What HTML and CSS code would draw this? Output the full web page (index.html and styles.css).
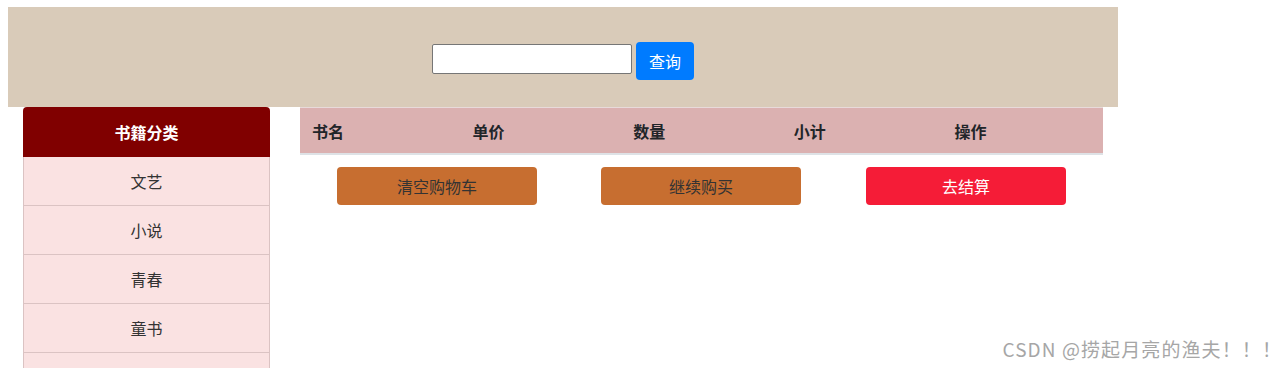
FILE: index.html
```html
<!DOCTYPE html>
<html lang="zh">
<head>
    <meta charset="UTF-8">
    <meta name="viewport" content="width=device-width, initial-scale=1.0">
    <title>购物车</title>
    <link rel="stylesheet" href="styles.css">
</head>
<body>

<div class="top-bar">
    <input type="text" class="search-input">
    <button class="search-btn">查询</button>
</div>

<div class="content">
    <div class="sidebar">
        <div class="sidebar-title">书籍分类</div>
        <div class="sidebar-item">文艺</div>
        <div class="sidebar-item">小说</div>
        <div class="sidebar-item">青春</div>
        <div class="sidebar-item">童书</div>
        <div class="sidebar-item">&nbsp;</div>
    </div>

    <div class="cart">
        <div class="cart-head">
            <div class="cart-col">书名</div>
            <div class="cart-col">单价</div>
            <div class="cart-col">数量</div>
            <div class="cart-col">小计</div>
            <div class="cart-col">操作</div>
        </div>
        <div class="cart-actions">
            <button class="btn btn-orange">清空购物车</button>
            <button class="btn btn-orange">继续购买</button>
            <button class="btn btn-red">去结算</button>
        </div>
    </div>
</div>

<div class="watermark">CSDN @捞起月亮的渔夫！！！</div>

</body>
</html>
```

FILE: styles.css
```css
body {
    font-family: "Noto Sans CJK SC", "Liberation Sans", sans-serif;
    font-size: 16px;
    color: #212529;
    margin: 7px 8px 0;
    padding: 0;
    overflow: hidden;
}

.top-bar {
    width: 1110px;
    height: 100px;
    box-sizing: border-box;
    padding-top: 35px;
    background-color: #d9cbb9;
    display: flex;
    justify-content: center;
    align-items: flex-start;
    gap: 4px;
}

.search-input {
    width: 200px;
    height: 30px;
    box-sizing: border-box;
    border: 1px solid #767676;
    border-radius: 2px;
    background: white;
    margin-top: 2px;
}

.search-btn {
    width: 58px;
    height: 38px;
    border: none;
    border-radius: 4px;
    background-color: #007bff;
    color: white;
    font-family: inherit;
    font-size: 16px;
    cursor: pointer;
}

.content {
    display: flex;
    gap: 30px;
    padding-left: 15px;
}

.sidebar {
    width: 247px;
}

.sidebar-title {
    height: 50px;
    line-height: 50px;
    background-color: #800000;
    color: white;
    font-weight: bold;
    text-align: center;
    border-radius: 4px 4px 0 0;
}

.sidebar-item {
    height: 48px;
    line-height: 48px;
    background-color: #fae2e2;
    color: #333;
    text-align: center;
    border: 1px solid #dbc3c3;
    border-top: none;
}

.cart {
    width: 803px;
}

.cart-head {
    display: flex;
    height: 45px;
    align-items: center;
    background-color: #dbb1b1;
    border-top: 1px solid #e8dada;
    border-bottom: 2px solid #dee2e6;
    font-weight: bold;
}

.cart-col {
    flex: 1;
    padding-left: 12px;
}

.cart-actions {
    display: flex;
    gap: 64px;
    padding: 12px 0 0 37px;
}

.btn {
    width: 200px;
    height: 38px;
    border: none;
    border-radius: 4px;
    font-family: inherit;
    font-size: 16px;
    cursor: pointer;
}

.btn-orange {
    background-color: #c76e30;
    color: #333;
}

.btn-red {
    background-color: #f51c37;
    color: white;
    margin-left: 1px;
}

.watermark {
    position: absolute;
    right: 2px;
    bottom: 6px;
    font-size: 19px;
    letter-spacing: 1.1px;
    color: #a6a6a6;
    text-shadow: 0 0 2px white;
}
```
